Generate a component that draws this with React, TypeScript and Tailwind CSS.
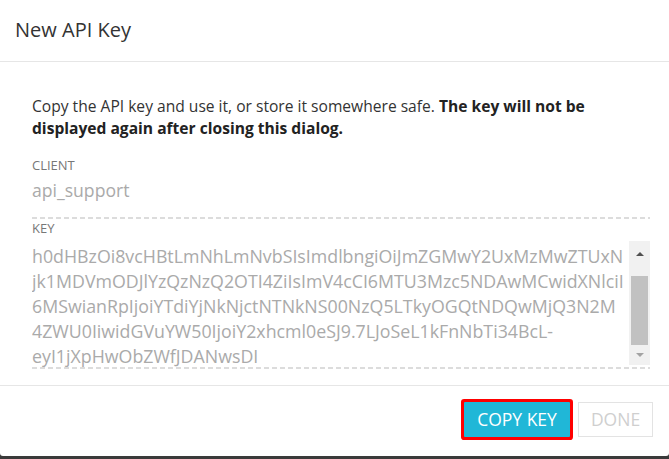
const keyLines = [
  "h0dHBzOi8vcHBtLmNhLmNvbSIsImdlbngiOiJmZGMwY2UxMzMwZTUxN",
  "jk1MDVmODJlYzQzNzQ2OTI4ZiIsImV4cCI6MTU3Mzc5NDAwMCwidXNlciI",
  "6MSwianRpIjoiYTdiYjNkNjctNTNkNS00NzQ5LTkyOGQtNDQwMjQ3N2M",
  "4ZWU0IiwidGVuYW50IjoiY2xhcml0eSJ9.7LJoSeL1kFnNbTi34BcL-",
  "eyI1jXpHwObZWfJDANwsDI",
];

const Dashes = () => (
  <div className="h-[2px] w-full bg-[linear-gradient(to_right,#dcdcdc_5px,transparent_5px)] bg-[length:8px_2px] bg-repeat-x" />
);

const App = () => {
  return (
    <div className="h-[459px] w-[669px] overflow-hidden bg-[#3a3a3a] font-['Open_Sans',sans-serif]">
      <div className="flex h-[456px] flex-col rounded-b-[3px] bg-white">
        <div className="flex h-[62px] items-center border-b border-[#e6e6e6] px-[15px] pb-[1px] text-[20px] text-[#333]">
          New API Key
        </div>

        <div className="flex-1 pl-[32px] pr-[19px] pt-[33px]">
          <p className="pr-[40px] text-[15.6px] leading-[22px] text-[#333]">
            Copy the API key and use it, or store it somewhere safe.{" "}
            <b className="font-bold text-[#222]">The key will not be displayed again after closing this dialog.</b>
          </p>

          <div className="mt-[17px] text-[13px] leading-[18px] text-[#777]">CLIENT</div>
          <div className="mt-[4px] text-[17.6px] leading-[24px] text-[#aaa]">api_support</div>
          <div className="mt-[15px]">
            <Dashes />
          </div>
          <div className="text-[13px] leading-[18px] text-[#777]">KEY</div>

          <div className="mt-[4px] flex h-[126px]">
            <div className="flex-1 overflow-hidden pt-[3px] text-[17.8px] leading-[25px] text-[#aaa]">
              {keyLines.map((l) => (
                <div key={l} className="whitespace-nowrap">
                  {l}
                </div>
              ))}
            </div>
            <div className="flex h-[124px] w-[21px] flex-col items-center bg-[#f1f1f1]">
              <div className="flex h-[25px] items-center justify-center">
                <div className="h-0 w-0 border-x-[4px] border-b-[4px] border-x-transparent border-b-[#505050]" />
              </div>
              <div className="mt-[10px] h-[69px] w-[17px] bg-[#c1c1c1]" />
              <div className="flex flex-1 items-center justify-center">
                <div className="h-0 w-0 border-x-[4px] border-t-[4px] border-x-transparent border-t-[#a3a3a3]" />
              </div>
            </div>
          </div>
          <Dashes />
        </div>

        <div className="flex h-[71px] items-start justify-end gap-[8px] border-t border-[#e6e6e6] pr-[16px] pt-[16px]">
          <button
            type="button"
            className="h-[35px] w-[106px] rounded-[1px] bg-[#20b7d7] text-[17.5px] text-white ring-3 ring-[#ff0000]"
          >
            COPY KEY
          </button>
          <button
            type="button"
            className="h-[35px] w-[75px] border border-[#e3e3e3] bg-white text-[17.5px] text-[#cfcfcf]"
          >
            DONE
          </button>
        </div>
      </div>
    </div>
  );
};

export default App;
